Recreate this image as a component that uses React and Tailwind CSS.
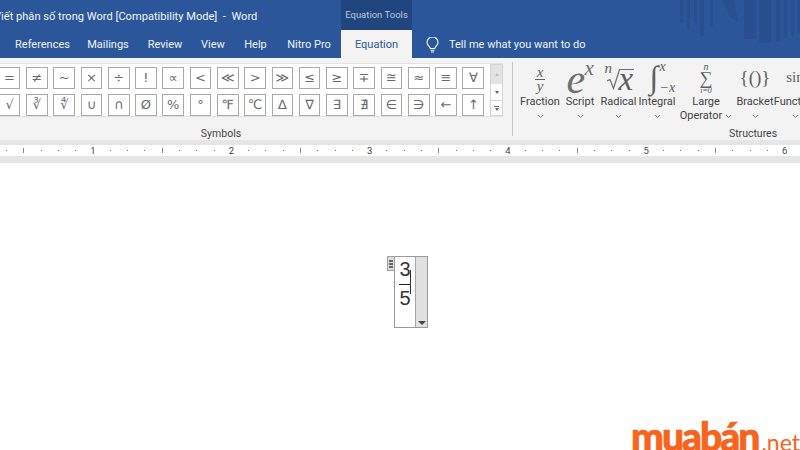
import React from "react";

const ui = { fontFamily: 'Roboto,"Noto Sans",sans-serif' };
const serif = { fontFamily: '"Liberation Serif","DejaVu Serif",serif' };
const math = { fontFamily: '"DejaVu Sans",sans-serif' };

const tabs = [
  ["References", "w-[71px]"],
  ["Mailings", "w-[60px]"],
  ["Review", "w-[54px]"],
  ["View", "w-[42px]"],
  ["Help", "w-[43px]"],
  ["Nitro Pro", "w-[64px]"],
];

const row1 = ["=", "≠", "~", "×", "÷", "!", "∝", "<", "≪", ">", "≫", "≤", "≥", "∓", "≅", "≈", "≡", "∀"];
const row2 = ["√", "∛", "∜", "∪", "∩", "Ø", "%", "°", "℉", "℃", "∆", "∇", "∃", "∄", "∈", "∋", "←", "↑"];

function Chevron({ className = "" }) {
  return (
    <svg width="7" height="5" viewBox="0 0 7 5" className={className}>
      <path d="M1 1l2.5 2.5L6 1" fill="none" stroke="#777" strokeWidth="1" />
    </svg>
  );
}

function SymbolRow({ items }) {
  return (
    <div className="flex gap-[5.6px]">
      {items.map((s) => (
        <div
          key={s}
          style={math}
          className="w-[21.7px] h-[22px] shrink-0 flex items-center justify-center border-[1.5px] border-[#a9a9a9] bg-white text-[13px] text-[#6a6a6a]"
        >
          {s}
        </div>
      ))}
    </div>
  );
}

function StructButton({ width, icon, label, second }) {
  return (
    <div className={`${width} shrink-0 flex flex-col items-center`}>
      <div className="h-[38px] w-full flex items-center justify-center text-[#5f5f5f]" style={serif}>
        {icon}
      </div>
      <div className="text-[11px] leading-[14px] mt-[-1px] text-[#444] whitespace-nowrap">{label}</div>
      {second ? (
        <div className="text-[11px] leading-[14px] text-[#444] whitespace-nowrap flex items-center gap-[3px]">
          {second}
          <Chevron />
        </div>
      ) : (
        <Chevron className="mt-[5px]" />
      )}
    </div>
  );
}

function Ruler() {
  const inches = [0, 1, 2, 3, 4, 5, 6];
  const cells = [0, 1, 2, 3, 4, 5, 6, 7];
  return (
    <div className="h-[11px] bg-white flex items-center ml-[-54px] text-[9.5px] text-[#444]">
      {inches.map((n) => (
        <div key={n} className="w-[138.33px] shrink-0 flex items-center">
          {cells.map((c) => (
            <div key={c} className="flex-1 flex items-center justify-center h-[11px]">
              {c === 0 && n > 0 ? <span className="leading-none">{n}</span> : null}
              {c === 4 ? <div className="w-px h-[5px] bg-[#8a8a8a]" /> : null}
              {c !== 0 && c !== 4 ? <div className="w-px h-px bg-[#777]" /> : null}
            </div>
          ))}
        </div>
      ))}
    </div>
  );
}

export default function App() {
  return (
    <div className="w-[800px] h-[450px] relative overflow-hidden bg-white" style={ui}>
      {/* Title and tabs */}
      <div className="relative h-[58px] bg-[#2b579a] text-white">
        <svg className="absolute right-0 top-0" width="122" height="44" viewBox="0 0 122 44">
          <g fill="#28508e">
            <rect x="2" y="0" width="3" height="23" />
            <rect x="9" y="0" width="3" height="29" />
            <rect x="16" y="0" width="3" height="23" />
            <rect x="22" y="0" width="4" height="36" />
            <rect x="32" y="0" width="3" height="27" />
            <path d="M44 0h12l4 22-8-5z" />
            <rect x="66" y="0" width="12" height="39" />
            <rect x="81" y="0" width="12" height="43" />
            <rect x="98" y="0" width="4" height="41" />
            <rect x="106" y="0" width="3" height="38" />
            <rect x="113" y="0" width="3" height="36" />
            <rect x="119" y="0" width="3" height="33" />
          </g>
        </svg>
        <div className="relative h-[30px] flex">
          <div className="w-[341px] overflow-hidden whitespace-nowrap text-[11.1px] leading-[33px] text-[#f2f5fa]">
            <span className="ml-[-6px] inline-block">Viết phân số trong Word [Compatibility Mode]&nbsp; -&nbsp; Word</span>
          </div>
          <div className="w-[71px] bg-[#21467f] text-[9.5px] leading-[30px] text-[#b9c8de] text-center whitespace-nowrap">
            Equation Tools
          </div>
        </div>
        <div className="relative h-[28px] flex items-stretch pl-[7px] text-[11px] text-[#eef2f8] pt-[2px]">
          {tabs.map(([t, w]) => (
            <div key={t} className={`${w} flex items-center justify-center whitespace-nowrap`}>
              {t}
            </div>
          ))}
          <div className="w-[71px] mt-[-2px] bg-[#f3f3f3] text-[#2b579a] flex items-center justify-center pt-[2px]">Equation</div>
          <div className="flex items-center ml-[14px]">
            <svg width="13" height="16" viewBox="0 0 13 16" fill="none" stroke="#f2f5fa" strokeWidth="1.1">
              <path d="M4.3 11.5C4 9.5 1 8.3 1 5.4a5.5 5.5 0 0 1 11 0c0 2.9-3 4.1-3.3 6.1z" />
              <path d="M4.5 13.2h4M5 15h3" />
            </svg>
            <span className="ml-[10px] text-[#eef2f8]">Tell me what you want to do</span>
          </div>
        </div>
      </div>

      {/* Ribbon */}
      <div className="h-[82px] bg-[#f3f3f3] flex relative">
        <div className="w-[513px] shrink-0 flex flex-col border-r border-[#c6c6c6] mt-[4px] mb-[4px]">
          <div className="h-[56px] w-[503px] mt-px bg-white border-y border-[#e2e2e2] flex">
            <div className="flex flex-col gap-[5px] pt-[3px] ml-[-1.3px] w-[491.5px] overflow-hidden">
              <SymbolRow items={row1} />
              <SymbolRow items={row2} />
            </div>
            <div className="w-[13px] flex flex-col border border-[#d4d4d4] bg-white">
              <div className="h-[19px] bg-[#e3e3e3] flex items-center justify-center">
                <div className="w-0 h-0 border-x-[2.5px] border-x-transparent border-b-[3px] border-b-[#bdbdbd]" />
              </div>
              <div className="h-[17px] border-b border-[#d4d4d4] flex items-center justify-center">
                <div className="w-0 h-0 border-x-[2.5px] border-x-transparent border-t-[3px] border-t-[#666]" />
              </div>
              <div className="flex-1 flex flex-col items-center justify-center gap-[1px]">
                <div className="w-[5px] h-px bg-[#666]" />
                <div className="w-0 h-0 border-x-[2.5px] border-x-transparent border-t-[3px] border-t-[#666]" />
              </div>
            </div>
          </div>
          <div className="text-[10.5px] leading-[13px] mt-[10px] text-[#444] text-center w-[442px]">Symbols</div>
        </div>
        <div className="flex-1 min-w-0 flex flex-col pl-[7px]">
          <div className="flex w-[310px] h-[68px]">
            <StructButton
              width="w-[40px]"
              label="Fraction"
              icon={
                <div className="flex flex-col items-center italic text-[15px] leading-[13px] mt-[4px]">
                  <span>x</span>
                  <div className="w-[10px] h-px bg-[#5f5f5f]" />
                  <span>y</span>
                </div>
              }
            />
            <StructButton
              width="w-[40px]"
              label="Script"
              icon={
                <span className="italic relative block w-[29px] h-[34px] text-[#6e6e6e]">
                  <span className="absolute left-[1px] top-[-2px] text-[42px] leading-none">e</span>
                  <span className="absolute left-[19px] top-[-2px] text-[21px] leading-none">x</span>
                </span>
              }
            />
            <StructButton
              width="w-[37px]"
              label="Radical"
              icon={
                <span className="italic relative block w-[30px] h-[30px]">
                  <svg className="absolute left-0 top-0" width="30" height="30" viewBox="0 0 30 30" fill="none" stroke="#6a6a6a">
                    <path d="M3 19l3-1.5 3.5 9L15.5 7.5H30" strokeWidth="1.2" />
                  </svg>
                  <span className="absolute left-[1px] top-[-1px] text-[15px] leading-none">n</span>
                  <span className="absolute left-[15px] top-[1px] text-[33px] leading-none">x</span>
                </span>
              }
            />
            <StructButton
              width="w-[40px]"
              label="Integral"
              icon={
                <span className="text-[32px] leading-none whitespace-nowrap relative italic ml-[-6px]">
                  ∫
                  <span className="text-[14px] absolute left-[10px] top-[-1px] leading-none">x</span>
                  <span className="text-[14px] leading-none absolute left-[10px] top-[20px]">−x</span>
                </span>
              }
            />
            <StructButton
              width="w-[58px]"
              label="Large"
              second="Operator"
              icon={
                <div className="flex flex-col items-center leading-none mt-[3px]">
                  <span className="italic text-[10px] leading-[8px]">n</span>
                  <span className="text-[18px] leading-[15px]">∑</span>
                  <span className="italic text-[8px] leading-[9px]">i=0</span>
                </div>
              }
            />
            <StructButton width="w-[40px]" label="Bracket" icon={<span className="text-[19px] whitespace-nowrap leading-none">{"{()}"}</span>} />
            <StructButton width="w-[40px]" label="Function" icon={<span className="text-[15px] leading-none">sin</span>} />
          </div>
          <div className="text-[10.5px] leading-[13px] mt-[1px] text-[#444] text-center w-[466px]">Structures</div>
        </div>
      </div>

      {/* Ruler band */}
      <div className="h-[23px] bg-[#e6e6e6] pt-[5px] overflow-hidden">
        <Ruler />
      </div>

      {/* Document */}
      <div className="flex justify-center pt-[93px] pl-[22px]">
        <div className="relative w-[34px] h-[72px] border border-[#9a9a9a] flex bg-white">
          <div className="absolute left-[-8px] top-[-1px] w-[8px] h-[15px] bg-[#dcdcdc] border border-[#a0a0a0] flex flex-col items-center justify-center gap-[1px]">
            <div className="w-[4px] h-[2px] bg-[#666]" />
            <div className="w-[4px] h-[2px] bg-[#666]" />
            <div className="w-[4px] h-[2px] bg-[#666]" />
          </div>
          <div className="w-[20px] flex flex-col items-center relative text-[#333]" style={{ fontFamily: '"Liberation Sans",sans-serif' }}>
            <span className="text-[20px] leading-[22px] mt-[1px]">3</span>
            <div className="w-[11px] h-px bg-[#222] mt-[4px] ml-[-1px]" />
            <span className="text-[20px] leading-[22px] mt-[2px]">5</span>
            <div className="absolute left-[15px] top-[13px] w-px h-[24px] bg-[#333]" />
          </div>
          <div className="flex-1 bg-[#e1e1e1] border-l border-[#a8a8a8] flex items-end justify-center pb-[2px]">
            <div className="w-0 h-0 border-x-[4px] border-x-transparent border-t-[4px] border-t-[#444]" />
          </div>
        </div>
      </div>

      {/* Watermark logo */}
      <div className="absolute right-0 bottom-[-6px] flex items-baseline whitespace-nowrap text-[#f7641e] leading-none" style={{ fontFamily: 'Lato,sans-serif' }}>
        <span className="font-black text-[39px] tracking-[-2px] [-webkit-text-stroke:0.7px_#f7641e]">muabán</span>
        <span className="font-normal text-[23px] ml-[3px]">.net</span>
      </div>
    </div>
  );
}
